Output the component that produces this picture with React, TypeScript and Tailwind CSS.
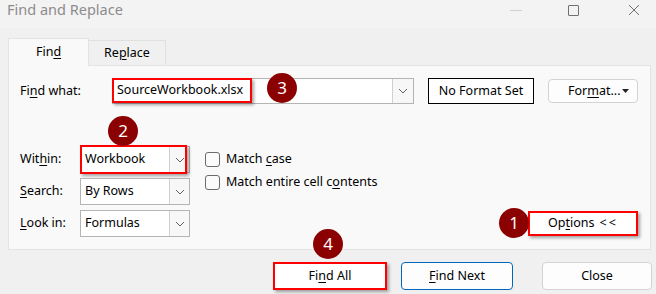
import { ReactNode } from "react";

const U = ({ children }: { children: ReactNode }) => <span className="underline underline-offset-2">{children}</span>;

const Badge = ({ n, className }: { n: string; className: string }) => (
  <div className={`absolute w-[30px] h-[30px] rounded-full bg-[#8b0000] text-white text-[17px] flex items-center justify-center z-20 ${className}`}>
    {n}
  </div>
);

const Chevron = () => (
  <svg width="10" height="6" viewBox="0 0 10 6" fill="none">
    <path d="M1 1l4 4 4-4" stroke="#606060" strokeWidth="1" />
  </svg>
);

const Select = ({ value, red }: { value: string; red?: boolean }) => (
  <div className="relative w-[110px] h-[27px] flex border border-[#b4b4b4] bg-white">
    <div className="flex-1 flex items-center pl-[4px]">{value}</div>
    <div className="w-[20px] flex items-center justify-center border-l border-[#d0d0d0] bg-[#f7f7f7]">
      <Chevron />
    </div>
    {red && (
      <div className="absolute -left-px -top-[2px] w-[107px] h-[29px] border-2 border-[#f00] shadow-[2px_2px_3px_rgba(0,0,0,0.35)]" />
    )}
  </div>
);

const Check = ({ children }: { children: ReactNode }) => (
  <div className="flex items-center gap-[6px] h-[15px]">
    <div className="w-[15px] h-[15px] rounded-[3px] border border-[#6b6b6b] bg-[#fbfbfb]" />
    <span>{children}</span>
  </div>
);

export default function App() {
  return (
    <div
      className="relative w-[656px] h-[294px] bg-[#f0f0f0] text-[12.5px] text-black overflow-hidden"
      style={{ fontFamily: '"Segoe UI", "Noto Sans", sans-serif' }}
    >
      {/* title bar */}
      <div className="h-[28px] bg-[#f3f3f3] flex items-center pl-[7px] pb-[8px]">
        <span className="text-[14.5px] text-[#8c8c8c]">Find and Replace</span>
        <div className="ml-auto flex items-center h-full">
          <div className="w-[12px] h-px bg-[#d0d0d0] mr-[46px]" />
          <div className="w-[11px] h-[11px] border border-[#707070] rounded-[1px] mr-[49px]" />
          <svg width="12" height="12" viewBox="0 0 12 12" className="mr-[16px]">
            <path d="M1 1l10 10M11 1L1 11" stroke="#707070" strokeWidth="1" />
          </svg>
        </div>
      </div>

      {/* tabs */}
      <div className="h-[37px] flex items-end pl-[8px]">
        <div className="relative z-10 -mb-px w-[81px] h-[28px] bg-[#f9f9f9] border border-b-0 border-[#e3e3e3] flex items-center justify-center">
          Fin<U>d</U>
        </div>
        <div className="w-[77px] h-[25px] bg-[#f0f0f0] border border-b-0 border-l-0 border-[#e0e0e0] flex items-center justify-center">
          Re<U>p</U>lace
        </div>
      </div>

      {/* panel */}
      <div className="mx-[8px] w-[643px] h-[185px] bg-[#f9f9f9] border border-[#e3e3e3] pl-[11px] pr-[12px] flex flex-col">
        <div className="mt-[12px] h-[26px] flex items-center">
          <div className="w-[92px]">
            Fi<U>n</U>d what:
          </div>
          <div className="relative w-[302px] h-[26px] flex border border-[#b4b4b4] bg-white">
            <div className="flex-1" />
            <div className="w-[21px] flex items-center justify-center border-l border-[#d0d0d0] bg-[#f7f7f7]">
              <Chevron />
            </div>
            <div className="absolute -left-px -top-px w-[140px] h-[25px] border-2 border-[#f00] shadow-[2px_2px_3px_rgba(0,0,0,0.35)] flex items-center pl-[3px] bg-white">
              SourceWorkbook.xlsx
            </div>
          </div>
          <div className="ml-[14px] w-[106px] h-[26px] border border-black bg-white flex items-center justify-center">
            No Format Set
          </div>
          <div className="ml-auto w-[90px] h-[24px] rounded-[4px] border border-[#d3d3d3] bg-[#fdfdfd] flex items-center pl-[19px]">
            For<U>m</U>at...
            <svg width="7" height="4" viewBox="0 0 7 4" className="ml-auto mr-[8px]">
              <path d="M0 0h7L3.5 4z" fill="#222" />
            </svg>
          </div>
        </div>

        <div className="mt-[42px] flex">
          <div className="flex flex-col gap-[5px]">
            <div className="flex items-center">
              <div className="w-[60px]">
                Wit<U>h</U>in:
              </div>
              <Select value="Workbook" red />
            </div>
            <div className="flex items-center">
              <div className="w-[60px]">
                <U>S</U>earch:
              </div>
              <Select value="By Rows" />
            </div>
            <div className="flex items-center">
              <div className="w-[60px]">
                <U>L</U>ook in:
              </div>
              <Select value="Formulas" />
            </div>
          </div>

          <div className="ml-[15px] pt-[6px] flex flex-col gap-[8px]">
            <Check>
              Match <U>c</U>ase
            </Check>
            <Check>
              Match entire cell c<U>o</U>ntents
            </Check>
          </div>

          <div className="ml-auto self-end mb-[1px] w-[110px] h-[25px] bg-white border-2 border-[#f00] shadow-[2px_2px_3px_rgba(0,0,0,0.35)] flex items-center justify-center gap-[5px]">
            <span>
              Op<U>t</U>ions
            </span>
            <span className="tracking-[2px]">&lt;&lt;</span>
          </div>
        </div>
      </div>

      {/* bottom buttons */}
      <div className="mt-[12px] flex justify-end pr-[4px]">
        <div className="w-[114px] h-[28px] bg-white border-2 border-[#f00] shadow-[2px_2px_3px_rgba(0,0,0,0.35)] flex items-center justify-center">
          Fi<U>n</U>d All
        </div>
        <div className="ml-[14px] w-[112px] h-[28px] bg-[#fdfdfd] rounded-[4px] border border-[#0067c0] flex items-center justify-center">
          <U>F</U>ind Next
        </div>
        <div className="ml-[29px] w-[110px] h-[28px] bg-[#fdfdfd] rounded-[4px] border border-[#d3d3d3] flex items-center justify-center">
          Close
        </div>
      </div>

      <Badge n="3" className="left-[267px] top-[73px]" />
      <Badge n="2" className="left-[108px] top-[116px]" />
      <Badge n="1" className="left-[499px] top-[208px]" />
      <Badge n="4" className="left-[313px] top-[229px]" />
    </div>
  );
}
